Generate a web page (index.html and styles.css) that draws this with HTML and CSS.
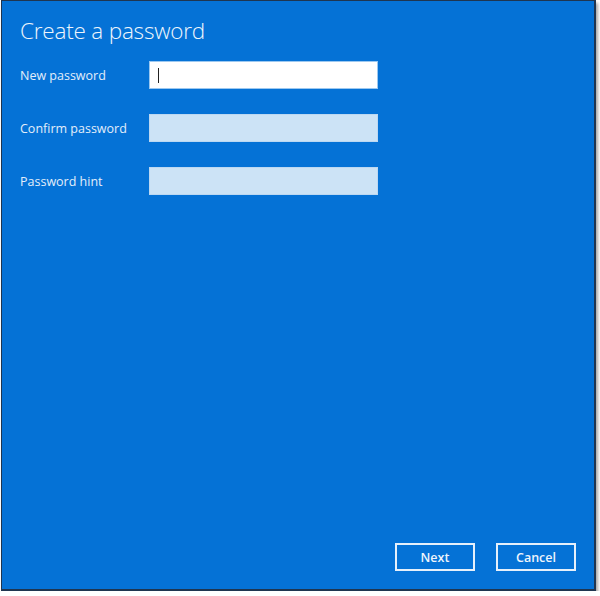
FILE: index.html
```html
<!DOCTYPE html>
<html lang="en">
<head>
    <meta charset="UTF-8">
    <meta name="viewport" content="width=device-width, initial-scale=1.0">
    <title>Create a password</title>
    <link rel="stylesheet" href="styles.css">
</head>
<body>
    <div class="dialog">
        <h1 class="dialog-title">Create a password</h1>
        <div class="pw-form">
            <label class="pw-label" for="new-pw">New password</label>
            <div class="pw-input pw-input-active" id="new-pw"><span class="caret"></span></div>
            <label class="pw-label" for="confirm-pw">Confirm password</label>
            <div class="pw-input" id="confirm-pw"></div>
            <label class="pw-label" for="hint-pw">Password hint</label>
            <div class="pw-input" id="hint-pw"></div>
        </div>
        <div class="dialog-buttons">
            <button class="dialog-button">Next</button>
            <button class="dialog-button">Cancel</button>
        </div>
    </div>
</body>
</html>
```

FILE: styles.css
```css
body {
    margin: 0;
    padding: 0;
    background-color: #ffffff;
    font-family: "Open Sans", "Noto Sans", sans-serif;
}
.dialog {
    box-sizing: border-box;
    width: 595px;
    height: 591px;
    margin-left: 1px;
    border: 1px solid #1f3550;
    border-right-width: 2px;
    border-bottom-width: 2px;
    background-color: #0572d6;
    box-shadow: 2px 3px 3px rgba(0, 0, 0, 0.35);
    padding: 13px 18px 18px 18px;
    display: flex;
    flex-direction: column;
}
.dialog-title {
    margin: 0;
    font-size: 22.5px;
    font-weight: 300;
    color: #eef5fc;
    line-height: 34px;
    letter-spacing: -0.2px;
}
.pw-form {
    display: grid;
    grid-template-columns: 129px 229px;
    row-gap: 25px;
    align-items: center;
    margin-top: 13px;
}
.pw-label {
    font-size: 12.5px;
    color: #e3eefa;
}
.pw-input {
    box-sizing: border-box;
    height: 28px;
    background-color: #cce3f6;
    border: 1px solid #bcd8f2;
    display: flex;
    align-items: center;
    padding-left: 8px;
}
.pw-input-active {
    background-color: #ffffff;
    border-color: #9cc8f0;
}
.caret {
    width: 1px;
    height: 15px;
    background-color: #222222;
}
.dialog-buttons {
    margin-top: auto;
    display: flex;
    justify-content: flex-end;
    gap: 21px;
}
.dialog-button {
    box-sizing: border-box;
    width: 80px;
    height: 28px;
    background: transparent;
    border: 2px solid #e6f0fb;
    color: #eef5fc;
    font-family: "Open Sans", "Noto Sans", sans-serif;
    font-size: 12.5px;
    font-weight: 600;
    cursor: pointer;
}
```
